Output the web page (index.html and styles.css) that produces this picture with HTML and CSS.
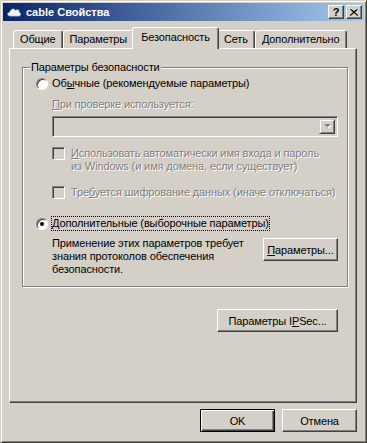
FILE: index.html
```html
<!DOCTYPE html>
<html lang="ru">
	<head>
		<meta charset="UTF-8" />
		<title>cable Свойства</title>
		<link rel="stylesheet" href="styles.css">
	</head>
	<body>
		<div class="window">
			<div class="titlebar">
				<svg class="title-icon" width="14" height="10" viewBox="0 0 14 10">
					<path d="M3 9 C0 9 0 5 3 5.5 C3 2 7 1 8.5 3.5 C10 2 13 3 12 5.5 C14.5 6 14 9 11.5 9 Z" fill="#f4f4f4" stroke="#b8c4dc" stroke-width="0.8" />
				</svg>
				<span class="title-text">cable Свойства</span>
				<div class="caption-buttons">
					<span class="cap-btn">?</span>
					<span class="cap-btn">
						<svg width="8" height="7" viewBox="0 0 8 7">
							<path d="M0.5 0.5 L7.5 6.5 M1.5 0.5 L8 6.5 M7.5 0.5 L0.5 6.5 M6.5 0.5 L0 6.5" stroke="#000" stroke-width="1" />
						</svg>
					</span>
				</div>
			</div>

			<div class="content">
				<div class="tabs">
					<div class="tab">Общие</div>
					<div class="tab">Параметры</div>
					<div class="tab active">Безопасность</div>
					<div class="tab">Сеть</div>
					<div class="tab">Дополнительно</div>
				</div>

				<div class="panel">
					<fieldset class="group">
						<legend>Параметры безопасности</legend>

						<div class="option">
							<span class="radio"></span>
							<span>Об<u>ы</u>чные (рекомендуемые параметры)</span>
						</div>

						<div class="sub">
							<div class="disabled"><u>П</u>ри проверке используется:</div>
							<div class="combo">
								<span class="combo-arrow">
									<svg width="7" height="5" viewBox="0 0 7 5">
										<path d="M1 1 H8 L4.5 4.5 Z" fill="#fff" />
										<path d="M0 0 H7 L3.5 3.5 Z" fill="#808080" />
									</svg>
								</span>
							</div>
							<div class="check-row first">
								<span class="checkbox"></span>
								<span class="disabled"><u>И</u>спользовать автоматически имя входа и пароль<br>из Windows (и имя домена, если существует)</span>
							</div>
							<div class="check-row">
								<span class="checkbox"></span>
								<span class="disabled">Тре<u>б</u>уется шифрование данных (иначе отключаться)</span>
							</div>
						</div>

						<div class="option second">
							<span class="radio checked"></span>
							<span class="focused"><u>Д</u>ополнительные (выборочные параметры)</span>
						</div>

						<div class="advanced">
							<p>Применение этих параметров требует<br>знания протоколов обеспечения<br>безопасности.</p>
							<button class="btn"><u>П</u>араметры...</button>
						</div>
					</fieldset>

					<div class="ipsec-row">
						<button class="btn wide">Параметры I<u>P</u>Sec...</button>
					</div>
				</div>

				<div class="footer">
					<button class="btn default">OK</button>
					<button class="btn">Отмена</button>
				</div>
			</div>
		</div>
	</body>
</html>
```

FILE: styles.css
```css
body {
	margin: 0;
	background-color: #d4d0c8;
	font-family: "Liberation Sans", Arial, sans-serif;
	font-size: 11px;
	line-height: 13px;
	letter-spacing: -0.12px;
	color: #000;
}
u {
	text-decoration: underline;
	text-underline-offset: 1px;
}
.window {
	width: 367px;
	height: 443px;
	box-sizing: border-box;
	border: 1px solid;
	border-color: #d4d0c8 #404040 #404040 #d4d0c8;
	box-shadow: inset 1px 1px #fff, inset -1px -1px #808080;
	padding: 2px;
	background-color: #d4d0c8;
}
.titlebar {
	height: 18px;
	display: flex;
	align-items: center;
	padding: 0 2px 0 4px;
	background: linear-gradient(to right, #0a246a, #a6caf0);
	color: #fff;
}
.title-icon {
	margin-right: 5px;
}
.title-text {
	font-weight: bold;
	letter-spacing: 0;
	flex: 1;
}
.caption-buttons {
	display: flex;
	gap: 2px;
}
.cap-btn {
	width: 16px;
	height: 14px;
	box-sizing: border-box;
	display: flex;
	align-items: center;
	justify-content: center;
	background-color: #d4d0c8;
	border: 1px solid;
	border-color: #fff #404040 #404040 #fff;
	box-shadow: inset -1px -1px #808080;
	color: #000;
	font-weight: bold;
	font-size: 11px;
}
.content {
	padding: 7px 7px 0 6px;
}
.tabs {
	height: 20px;
	display: flex;
	align-items: flex-end;
	padding-left: 4px;
}
.tab {
	height: 18px;
	box-sizing: border-box;
	padding: 0 6px;
	line-height: 16px;
	border: 1px solid;
	border-bottom: none;
	border-color: #fff #404040 transparent #fff;
	border-radius: 3px 3px 0 0;
	box-shadow: inset -1px 0 #808080;
	white-space: nowrap;
}
.tab.active {
	position: relative;
	z-index: 1;
	height: 22px;
	margin: 0 -2px -1px;
	padding: 0 8px;
	line-height: 18px;
	background-color: #d4d0c8;
}
.panel {
	height: 355px;
	box-sizing: border-box;
	border: 1px solid;
	border-color: #fff #404040 #404040 #fff;
	box-shadow: inset -1px -1px #808080;
	padding: 12px 8px 0 12px;
}
.group {
	margin: 0;
	padding: 3px 9px 10px 13px;
	border: 1px solid #808080;
	box-shadow: inset 1px 1px #fff, 1px 1px #fff;
	white-space: nowrap;
}
.group legend {
	margin-left: -6px;
	padding: 0 1px;
	background-color: #d4d0c8;
}
.option {
	display: flex;
	align-items: center;
	height: 13px;
}
.option.second {
	margin-top: 18px;
}
.radio {
	width: 12px;
	height: 12px;
	box-sizing: border-box;
	margin-right: 4px;
	border-radius: 50%;
	border: 1px solid;
	border-color: #808080 #fff #fff #808080;
	box-shadow: inset 1px 1px #404040;
	background-color: #fff;
	display: flex;
	align-items: center;
	justify-content: center;
}
.radio.checked::after {
	content: "";
	width: 4px;
	height: 4px;
	border-radius: 50%;
	background-color: #000;
}
.focused {
	outline: 1px dotted #000;
}
.sub {
	padding-left: 16px;
}
.sub > .disabled {
	margin-top: 8px;
}
.disabled {
	color: #808080;
	text-shadow: 1px 1px #fff;
}
.combo {
	height: 21px;
	margin-top: 5px;
	box-sizing: border-box;
	border: 1px solid;
	border-color: #808080 #fff #fff #808080;
	box-shadow: inset 1px 1px #404040, inset -1px -1px #d4d0c8;
	padding: 2px;
	display: flex;
	justify-content: flex-end;
}
.combo-arrow {
	width: 16px;
	height: 15px;
	box-sizing: border-box;
	border: 1px solid;
	border-color: #d4d0c8 #404040 #404040 #d4d0c8;
	box-shadow: inset 1px 1px #fff, inset -1px -1px #808080;
	display: flex;
	align-items: center;
	justify-content: center;
}
.check-row {
	display: flex;
	align-items: flex-start;
	margin-top: 13px;
}
.check-row.first {
	margin-top: 10px;
}
.checkbox {
	flex: none;
	width: 13px;
	height: 13px;
	box-sizing: border-box;
	margin-right: 6px;
	border: 1px solid;
	border-color: #808080 #fff #fff #808080;
	box-shadow: inset 1px 1px #404040, inset -1px -1px #d4d0c8;
	background-color: #d4d0c8;
}
.advanced {
	display: flex;
	justify-content: space-between;
	align-items: flex-start;
	margin-top: 7px;
	padding-left: 16px;
}
.advanced p {
	margin: 0;
}
.btn {
	height: 23px;
	width: 75px;
	box-sizing: border-box;
	margin: 1px 0 0;
	padding: 0;
	font-family: inherit;
	font-size: 11px;
	letter-spacing: inherit;
	color: #000;
	background-color: #d4d0c8;
	border: 1px solid;
	border-color: #fff #404040 #404040 #fff;
	box-shadow: inset -1px -1px #808080;
	border-radius: 0;
}
.btn.wide {
	width: 121px;
}
.btn.default {
	border-color: #000;
	box-shadow: inset 1px 1px #fff, inset -1px -1px #404040, inset -2px -2px #808080;
}
.ipsec-row {
	display: flex;
	justify-content: flex-end;
	margin-top: 21px;
	padding-right: 10px;
}
.footer {
	display: flex;
	justify-content: flex-end;
	gap: 7px;
	margin-top: 6px;
}
.footer .btn {
	margin: 0;
}
```
